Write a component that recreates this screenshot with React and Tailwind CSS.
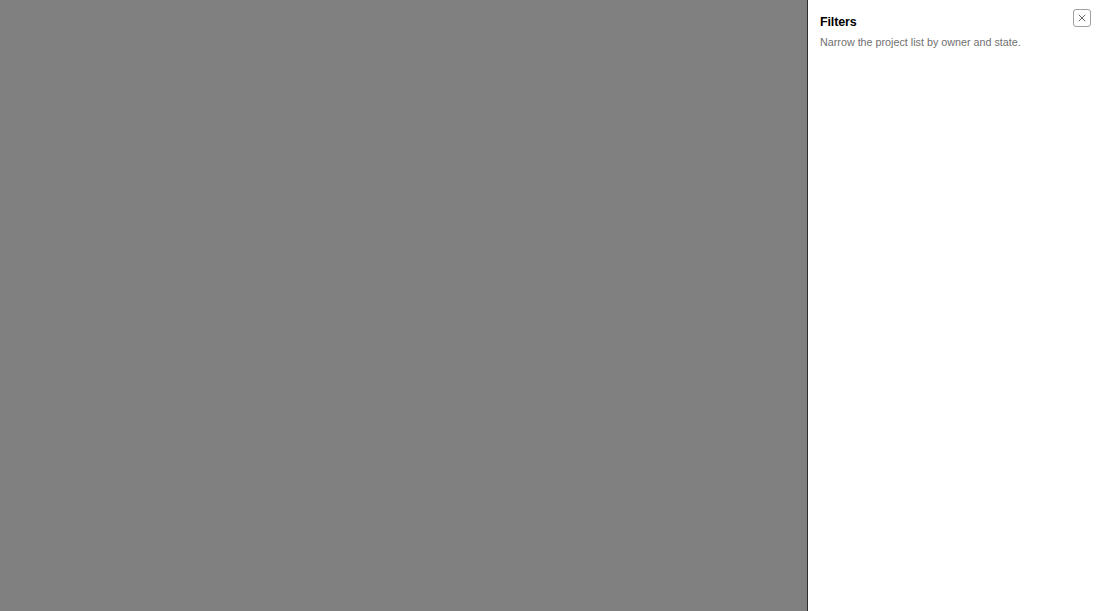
import { X } from 'lucide-react'

const App = () => {
  return (
    <div
      className="flex h-[611px] w-[1100px] bg-[#808080]"
      style={{ fontFamily: '"Liberation Sans", Arial, sans-serif' }}
    >
      {/* Overlay */}
      <div className="flex-1" />

      {/* Filters drawer */}
      <aside className="relative w-[293px] border-l border-[#2e2e2e] bg-white px-3 pt-[14px]">
        <h2 className="text-[12.5px] font-bold leading-[16px] tracking-[-0.15px] text-black">Filters</h2>
        <p className="mt-[5px] text-[10.75px] leading-[14px] text-[#707070]">
          Narrow the project list by owner and state.
        </p>
        <button
          type="button"
          aria-label="Close"
          className="absolute right-[9px] top-[9px] flex h-[18px] w-[18px] items-center justify-center rounded-[3px] border border-[#a0a0a0] bg-white text-[#333]"
        >
          <X size={12} strokeWidth={1.5} />
        </button>
      </aside>
    </div>
  )
}

export default App
